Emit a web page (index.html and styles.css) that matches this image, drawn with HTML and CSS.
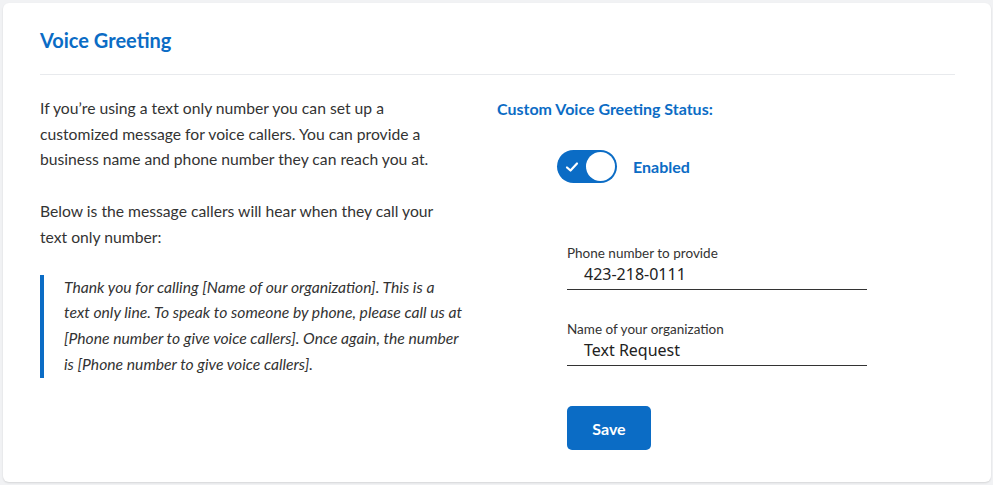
FILE: index.html
```html
<!DOCTYPE html>
<html>
<head>
<meta charset="utf-8">
<link rel="stylesheet" href="styles.css">
</head>
<body>
<div class="card">
  <h1 class="title">Voice Greeting</h1>
  <div class="divider"></div>
  <div class="content">
    <div class="left">
      <p>If you’re using a text only number you can set up a customized message for voice callers. You can provide a business name and phone number they can reach you at.</p>
      <p class="last">Below is the message callers will hear when they call your text only number:</p>
      <blockquote>Thank you for calling [Name of our organization]. This is a<br>text only line. To speak to someone by phone, please call us at<br>[Phone number to give voice callers]. Once again, the number<br>is [Phone number to give voice callers].</blockquote>
    </div>
    <div class="right">
      <div class="status-title">Custom Voice Greeting Status:</div>
      <div class="toggle-row">
        <div class="toggle">
          <svg class="check" width="14" height="12" viewBox="0 0 14 12"><path d="M2 6.5 L5.5 9.5 L12 2.5" fill="none" stroke="#fff" stroke-width="2.2" stroke-linecap="round" stroke-linejoin="round"/></svg>
          <span class="knob"></span>
        </div>
        <span class="toggle-label">Enabled</span>
      </div>
      <div class="form">
        <label class="field">
          <span class="field-label">Phone number to provide</span>
          <span class="field-value">423-218-0111</span>
        </label>
        <label class="field">
          <span class="field-label">Name of your organization</span>
          <span class="field-value">Text Request</span>
        </label>
        <button class="save">Save</button>
      </div>
    </div>
  </div>
</div>
</body>
</html>
```
FILE: styles.css
```css
html, body {
  margin: 0;
  padding: 0;
  background: #f1f2f4;
  font-family: Lato, "Open Sans", sans-serif;
}
body {
  padding: 3px 2px 3px 3px;
  height: 485px;
  box-sizing: border-box;
}
.card {
  background: #fff;
  border-radius: 6px;
  box-shadow: 0 1px 2px rgba(0,0,0,0.12);
  padding: 23px 36px 0 37px;
  height: 479px;
  box-sizing: border-box;
}
.title {
  margin: 0;
  font-size: 20px;
  font-weight: 700;
  color: #0b6cc5;
  line-height: 28px;
  height: 28px;
}
.divider {
  height: 1px;
  background: #e8eaed;
  margin-top: 20px;
}
.content {
  display: flex;
  padding-top: 21px;
}
.left {
  width: 410px;
  color: #333;
  font-size: 15.7px;
  line-height: 25.7px;
}
.left p {
  margin: 0 0 26px 0;
}
.left p.last {
  margin-bottom: 24px;
}
blockquote {
  margin: 0 -30px 0 0;
  border-left: 4px solid #0b6cc5;
  padding: 0 0 0 20px;
  font-style: italic;
  color: #333;
  line-height: 25.8px;
  white-space: nowrap;
}
.right {
  margin-left: 47px;
  display: flex;
  flex-direction: column;
}
.status-title {
  font-size: 16px;
  font-weight: 700;
  color: #0b6cc5;
  line-height: 26px;
}
.toggle-row {
  display: flex;
  align-items: center;
  margin-top: 28px;
  margin-left: 60px;
}
.toggle {
  width: 60px;
  height: 33px;
  border-radius: 17px;
  background: #0b6cc5;
  display: flex;
  align-items: center;
  justify-content: space-between;
  padding: 0 2px 0 8px;
  box-sizing: border-box;
}
.check { display: block; }
.knob {
  width: 29px;
  height: 29px;
  border-radius: 50%;
  background: #fff;
}
.toggle-label {
  margin-left: 16px;
  font-size: 16px;
  font-weight: 700;
  color: #0b6cc5;
}
.form {
  margin-left: 70px;
  margin-top: 61px;
  display: flex;
  flex-direction: column;
}
.field {
  display: flex;
  flex-direction: column;
  width: 300px;
  border-bottom: 1px solid #333;
  margin-bottom: 30px;
}
.field-label {
  font-size: 13.5px;
  color: #333;
  line-height: 18px;
}
.field-value {
  font-family: "Noto Sans", "Open Sans", sans-serif;
  font-size: 16px;
  color: #222;
  padding-left: 17px;
  line-height: 24px;
  height: 27px;
}
.save {
  margin-top: 10px;
  width: 84px;
  height: 44px;
  border: none;
  border-radius: 5px;
  background: #0b6cc5;
  color: #fff;
  font-family: Lato, sans-serif;
  font-weight: 700;
  font-size: 16px;
  cursor: pointer;
}
```
